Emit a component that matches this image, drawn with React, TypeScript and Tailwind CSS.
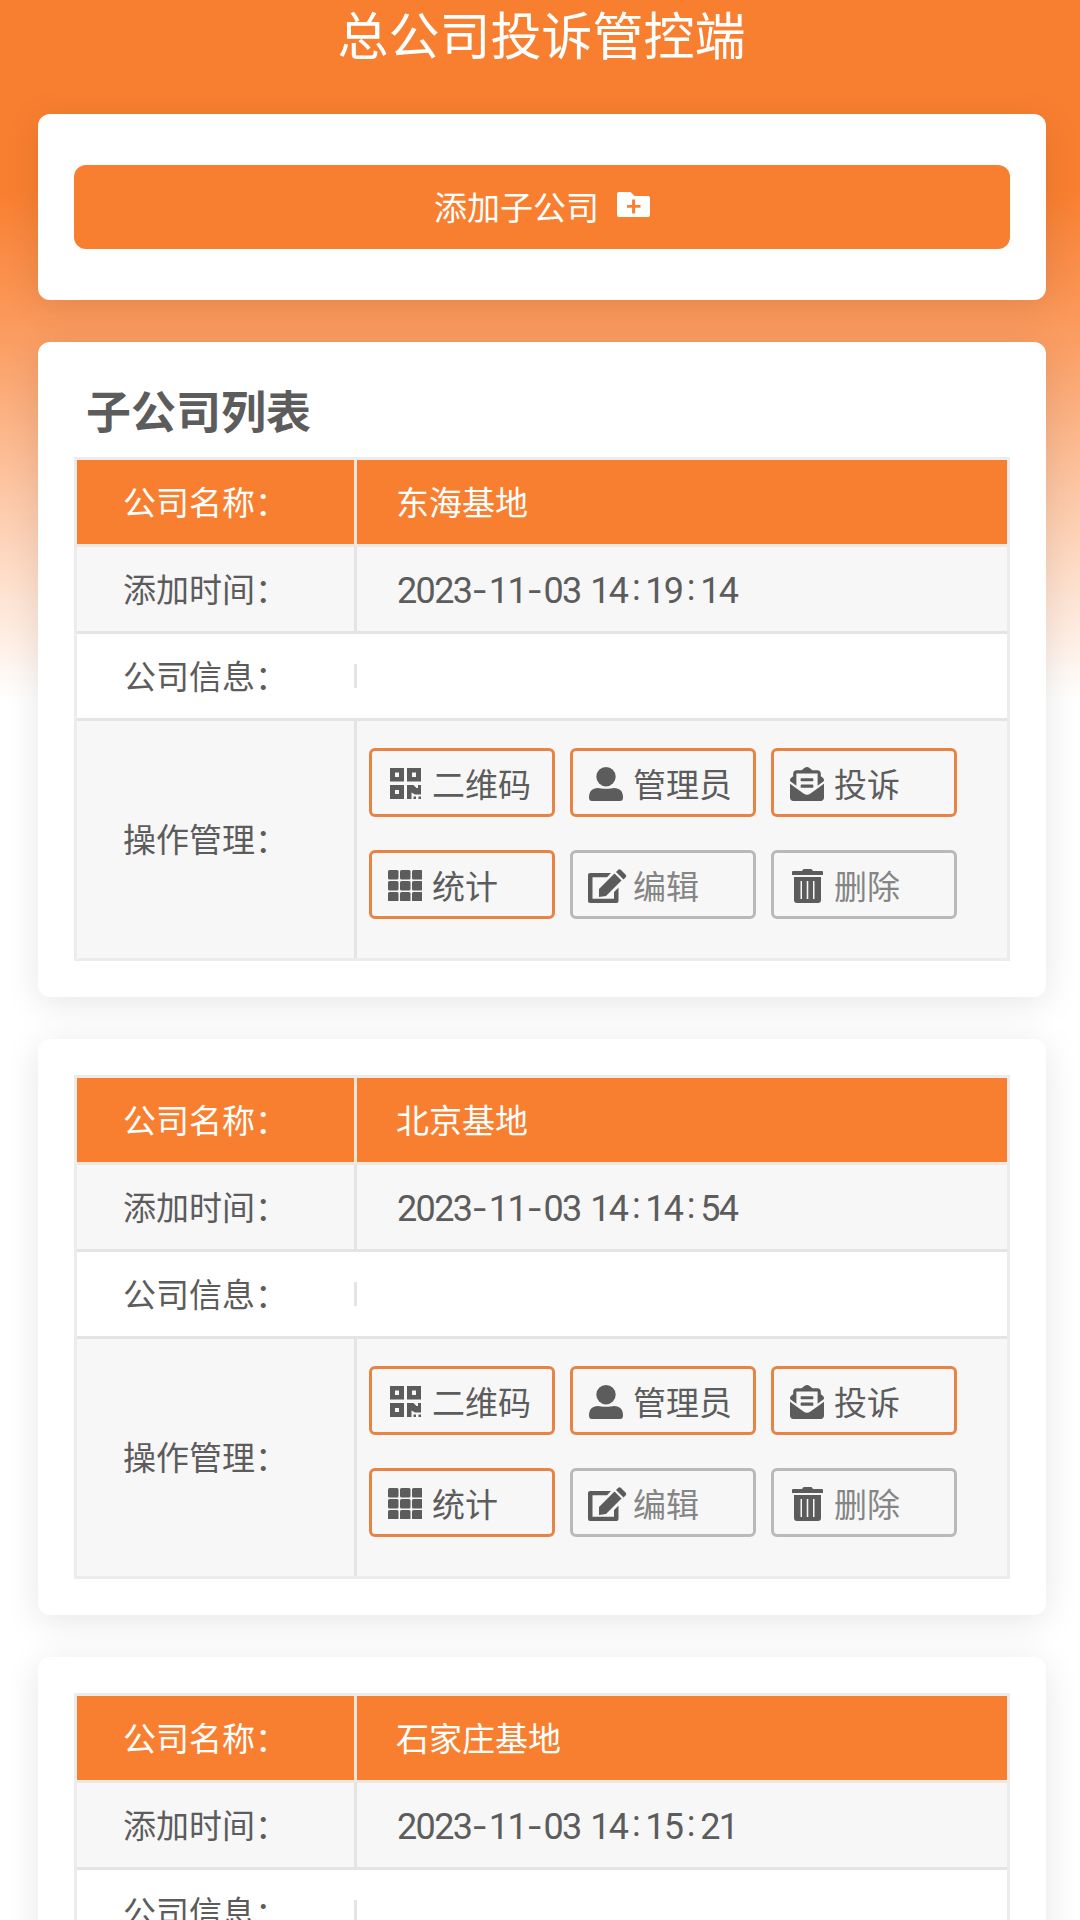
import { ReactNode } from 'react';
import { FaEnvelopeOpenText } from 'react-icons/fa';

interface Company {
  name: string;
  createdAt: string;
}

const COMPANIES: Company[] = [
  { name: '东海基地', createdAt: '2023-11-03 14:19:14' },
  { name: '北京基地', createdAt: '2023-11-03 14:14:54' },
  { name: '石家庄基地', createdAt: '2023-11-03 14:15:21' },
];

function FolderPlusIcon() {
  return (
    <svg viewBox="0 0 33 25" className="w-[33px] h-[25px]">
      <path
        fill="#fff"
        fillRule="evenodd"
        d="M2 0H13.5L17.5 4H31Q33 4 33 6V23Q33 25 31 25H2Q0 25 0 23V2Q0 0 2 0ZM15.1 7.500V13H10V15.8H15.1V21.500H18.1V15.8H23.500V13H18.1V7.500Z"
      />
    </svg>
  );
}

function QrIcon() {
  return (
    <svg viewBox="0 0 31 31" className="w-[31px] h-[31px]" fill="#5c5c5c" fillRule="evenodd">
      <path d="M0 0H14V13.500H0ZM5 4.500V9H9V4.500Z" />
      <path d="M17 0H31V13.500H17ZM22 4.500V9H26V4.500Z" />
      <path d="M0 17H14V31H0ZM5 22V26H9V22Z" />
      <path d="M17 17H23.500L26.500 20H28V17H31V26.500H25L21.500 24.500V31H17ZM23.500 28.500H26V31H23.500ZM28.500 28.500H31V31H28.500Z" />
    </svg>
  );
}

function UserIcon() {
  return (
    <svg viewBox="0 0 34 34" className="w-[34px] h-[34px]" fill="#5c5c5c">
      <circle cx="17" cy="9.700" r="9.700" />
      <path d="M0 30.500C0 24.500 3 21 9 21C12 22 22 22 25 21C31 21 34 24.500 34 30.500Q34 34 31 34H3Q0 34 0 30.500Z" />
    </svg>
  );
}

function GridIcon() {
  return (
    <svg viewBox="0 0 34 31" className="w-[34px] h-[31px]" fill="#5c5c5c">
      {[0, 11, 22].map((y) =>
        [0, 12, 24].map((x) => <rect key={`${x}-${y}`} x={x} y={y} width="10.5" height="9.5" rx="1.5" />)
      )}
    </svg>
  );
}

function EditIcon() {
  return (
    <svg viewBox="0 0 39 34" className="w-[39px] h-[34px]" fill="#5c5c5c">
      <path d="M2 4H23L19 8.300H4.500V29.700H26V23L30.500 18.500V32Q30.500 34 28.500 34H2Q0 34 0 32V6Q0 4 2 4Z" />
      <path d="M11 20L26.500 4.500L33.500 11.500L18 27L11 28Z" />
      <path d="M28 3L30 1Q31.500 -0.500 33 1L37.500 5.500Q39 7 37.500 8.500L35.500 10.500Z" />
    </svg>
  );
}

function TrashIcon() {
  return (
    <svg viewBox="0 0 31 34" className="w-[31px] h-[34px]" fill="#5c5c5c" fillRule="evenodd">
      <path d="M1 2H10Q11 0 12 0H19Q20 0 21 2H30Q31 2 31 3V6H0V3Q0 2 1 2Z" />
      <path d="M2 8H29V31Q29 34 26 34H5Q2 34 2 31ZM8.500 12V30H10V12ZM14.700 12V30H16.300V12ZM21 12V30H22.500V12Z" />
    </svg>
  );
}

interface ActionProps {
  icon: ReactNode;
  label: string;
  muted?: boolean;
}

function Action({ icon, label, muted }: ActionProps) {
  return (
    <button
      type="button"
      className={`flex h-[69px] w-[186px] items-center rounded-md border-3 pt-0.5 pl-[13px] text-[33px] leading-none
        ${muted ? 'border-[#b9b9b9] text-[#858585]' : 'border-[#e88443] text-[#5c5c5c]'}`}
    >
      <span className="flex w-10 shrink-0 items-center justify-center text-[#5c5c5c]">{icon}</span>
      <span className="ml-[7px] whitespace-nowrap">{label}</span>
    </button>
  );
}

// Digits keep the font's advance, separators get a wider slot of their own
function Timestamp({ value }: { value: string }) {
  return (
    <span className="mt-[3px] font-[Roboto,sans-serif] text-[36px] tracking-[-1.65px] whitespace-pre">
      {value.split(/([-: ])/).map((part, i) => {
        if (part === '-') {
          return (
            <span key={i} className="inline-block w-[17.5px] scale-x-130 text-center tracking-normal">
              -
            </span>
          );
        }
        if (part === ':') {
          return (
            <span key={i} className="relative -top-[3px] inline-block w-[17.8px] text-center tracking-normal">
              :
            </span>
          );
        }
        if (part === ' ') {
          return (
            <span key={i} className="inline-block w-[9.5px] tracking-normal">
              {' '}
            </span>
          );
        }
        return <span key={i}>{part}</span>;
      })}
    </span>
  );
}

function Label({ children }: { children: ReactNode }) {
  return <div className="flex w-[277px] shrink-0 items-center pb-0.5 pl-[46px]">{children}</div>;
}

function CompanyTable({ company }: { company: Company }) {
  return (
    <div className="border-3 border-[#ececec] text-[33px] leading-none text-[#5c5c5c]">
      <div className="flex h-[87px] border-b-3 border-[#eee8e3] bg-[#f97f30] text-white">
        <Label>公司名称：</Label>
        <div className="flex flex-1 items-center border-l-3 border-[#f3e6dc] pb-0.5 pl-[39px]">{company.name}</div>
      </div>
      <div className="flex h-[87px] border-b-3 border-[#e4e4e4] bg-[#f7f7f7]">
        <Label>添加时间：</Label>
        <div className="flex flex-1 items-center border-l-3 border-[#e4e4e4] pl-10">
          <Timestamp value={company.createdAt} />
        </div>
      </div>
      <div className="flex h-[87px] items-center border-b-3 border-[#e4e4e4]">
        <Label>公司信息：</Label>
        <div className="h-6 w-[3px] bg-[#e4e4e4]" />
      </div>
      <div className="flex h-[237px] bg-[#f7f7f7]">
        <Label>操作管理：</Label>
        <div className="flex-1 border-l-3 border-[#e4e4e4] pt-[27px] pl-3">
          <div className="grid grid-cols-[186px_186px_186px] gap-x-[15px] gap-y-[33px]">
            <Action icon={<QrIcon />} label="二维码" />
            <Action icon={<UserIcon />} label="管理员" />
            <Action icon={<FaEnvelopeOpenText className="h-[34px] w-[34px]" />} label="投诉" />
            <Action icon={<GridIcon />} label="统计" />
            <Action
              icon={
                <span className="ml-[3px]">
                  <EditIcon />
                </span>
              }
              label="编辑"
              muted
            />
            <Action icon={<TrashIcon />} label="删除" muted />
          </div>
        </div>
      </div>
    </div>
  );
}

function Card({ children }: { children: ReactNode }) {
  return (
    <section className="rounded-xl bg-white px-9 pb-9 shadow-[0_6px_36px_rgba(0,0,0,0.1)]">{children}</section>
  );
}

export default function App() {
  return (
    <div
      className="h-[1920px] w-[1080px] overflow-hidden bg-white
        bg-[linear-gradient(180deg,#f97f30_0px,#f97f30_190px,#fb9d62_340px,#fdc9a8_500px,#ffffff_700px)]
        font-['Noto_Sans_CJK_SC',sans-serif]"
    >
      <h1 className="h-[114px] pl-[3px] text-center text-[51px] leading-[67px] text-white">总公司投诉管控端</h1>

      <main className="mr-[34px] ml-[38px] flex flex-col gap-[42px]">
        <Card>
          <div className="pt-[51px] pb-[15px]">
            <button
              type="button"
              className="flex h-[84px] w-full items-center justify-center gap-[18px] rounded-xl bg-[#f97f30] pb-0.5 text-[33px] leading-none text-white"
            >
              添加子公司
              <span className="-mt-1">
                <FolderPlusIcon />
              </span>
            </button>
          </div>
        </Card>

        {COMPANIES.map((company, i) => (
          <Card key={company.name}>
            {i === 0 ? (
              <h2 className="h-[115px] pt-[45px] pl-3 text-[45px] leading-[45px] font-bold text-[#5c5c5c]">
                子公司列表
              </h2>
            ) : (
              <div className="h-9" />
            )}
            <CompanyTable company={company} />
          </Card>
        ))}
      </main>
    </div>
  );
}
